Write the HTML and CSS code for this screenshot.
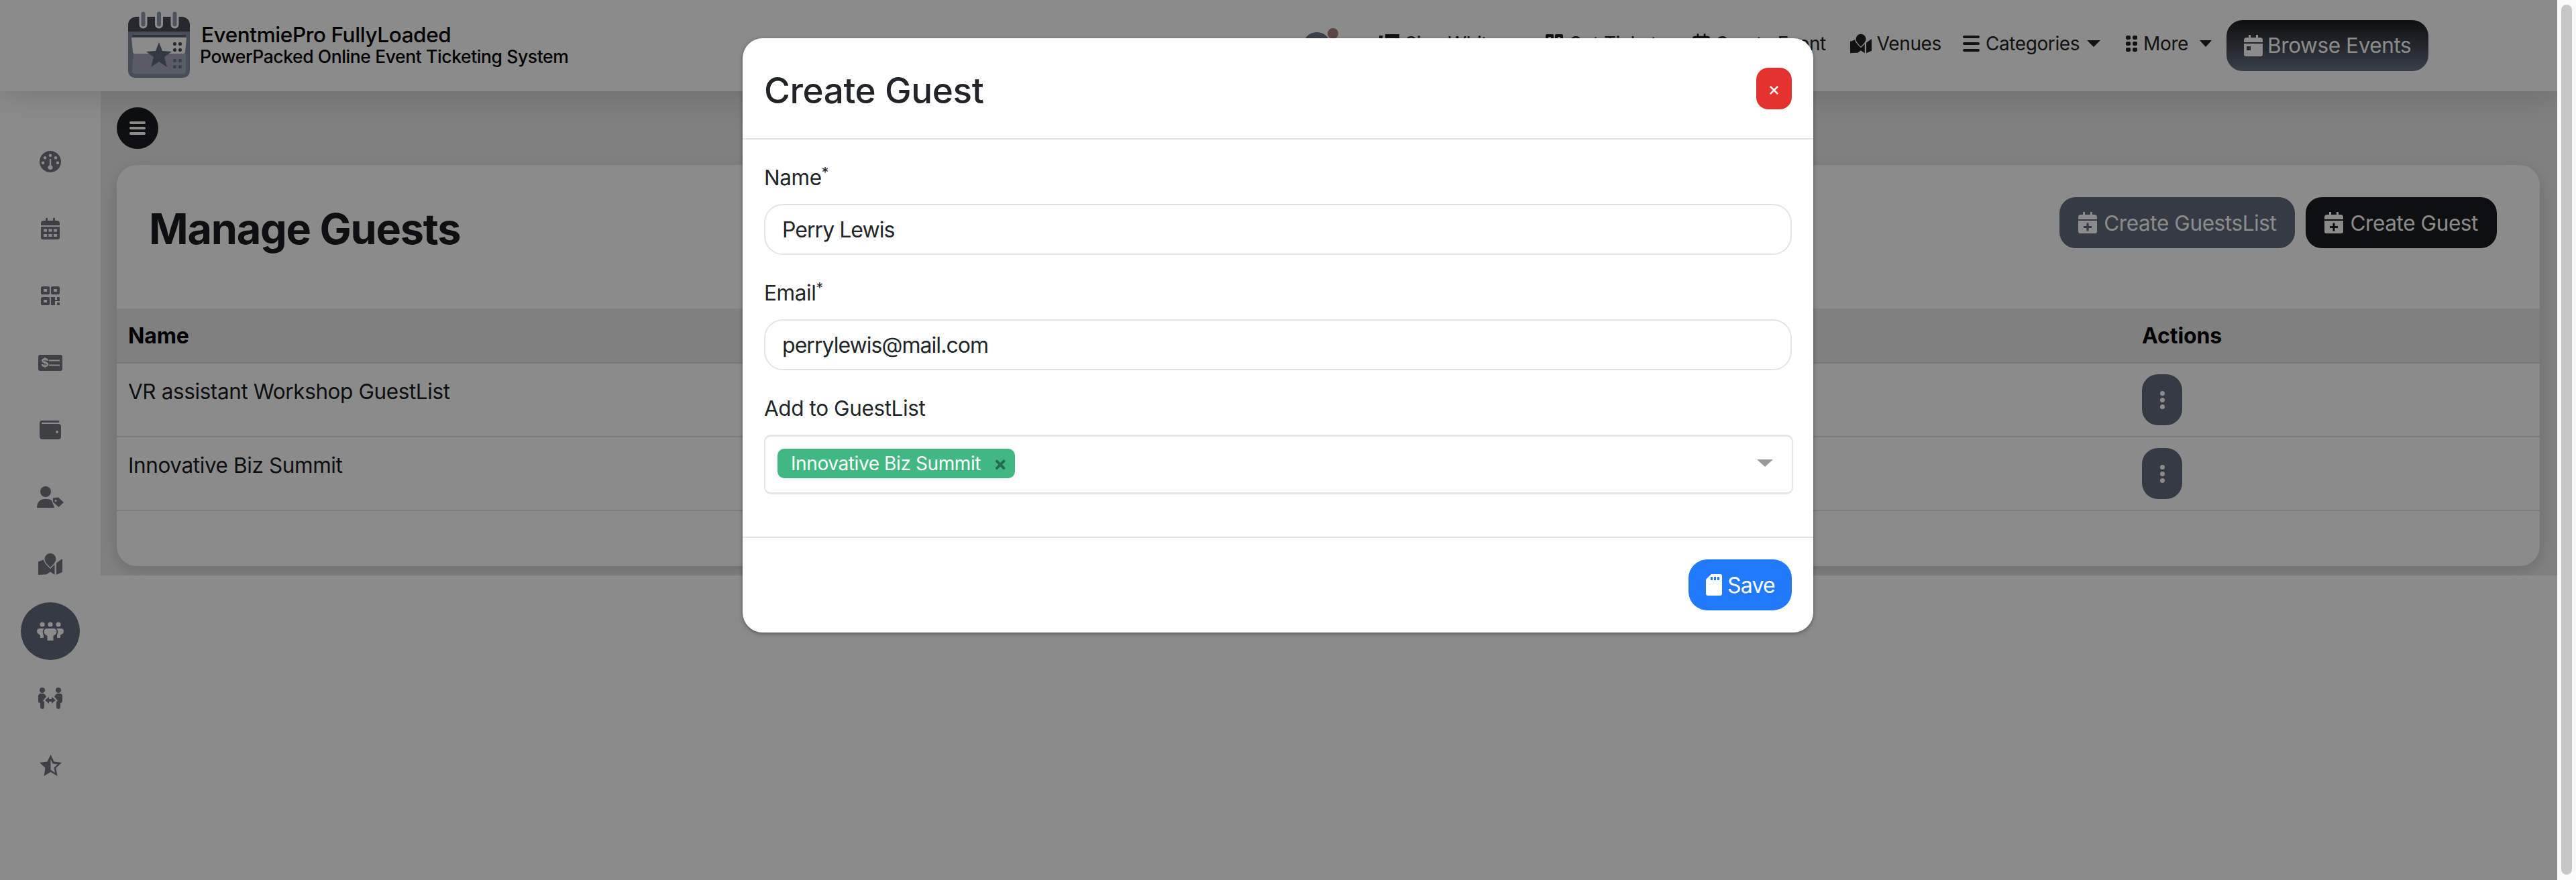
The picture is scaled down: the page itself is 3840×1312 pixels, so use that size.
FILE: index.html
```html
<!DOCTYPE html>
<html lang="en">
<head>
    <meta charset="UTF-8">
    <title>Manage Guests</title>
    <link rel="stylesheet" href="styles.css">
</head>
<body>
    <svg class="sprite" aria-hidden="true">
        <symbol id="cal-plus" viewBox="0 0 28 32">
            <path fill-rule="evenodd" d="M7 0h3v4h8V0h3v4h3a4 4 0 0 1 4 4v3H0V8a4 4 0 0 1 4-4h3zM0 13h28v16a3 3 0 0 1-3 3H3a3 3 0 0 1-3-3zM12.500 16.500h3v4.500H20v3h-4.500v4.500h-3V24H8v-3h4.500z"/>
        </symbol>
        <symbol id="cal-day" viewBox="0 0 28 32">
            <path fill-rule="evenodd" d="M7 0h3v4h8V0h3v4h3a4 4 0 0 1 4 4v3H0V8a4 4 0 0 1 4-4h3zM0 13h28v16a3 3 0 0 1-3 3H3a3 3 0 0 1-3-3zM4 17v6h6v-6z"/>
        </symbol>
        <symbol id="map-pin" viewBox="0 0 36 32">
            <path d="M18 0a8.500 8.500 0 0 1 8.500 8.500c0 4-5 9.500-8.500 12.500-3.500-3-8.500-8.500-8.500-12.500A8.500 8.500 0 0 1 18 0zM0 12.500l8-3c.5 3 3.500 7 6 9.500v11l-3 1.500-11 .5zM36 8v20l-9 4V14.500zM11.500 16.500L18 23l6.500-6.500V32L18 27.500 11.500 32z"/>
        </symbol>
    </svg>

    <div class="page">
        <div class="main">
            <!-- top bar -->
            <header class="topbar">
                <div class="brand">
                    <svg class="logo" viewBox="0 0 92 100">
                        <path fill="#868ea2" d="M0 28h92v62a10 10 0 0 1-10 10H10a10 10 0 0 1-10-10z"/>
                        <path fill="#444a54" d="M12 9h68a12 12 0 0 1 12 12v10H0V21A12 12 0 0 1 12 9z"/>
                        <path fill="#555c6b" d="M6 39h80v-3H6z"/>
                        <path fill="#a3aab9" d="M8 64h78v26a4 4 0 0 1-4 4H10a4 4 0 0 1-4-4z"/>
                        <path fill="#fff" d="M5 40h82l-2 21a3 3 0 0 1-3 3H10a3 3 0 0 1-3-3z"/>
                        <path fill="#5f6778" d="M46 47l5 13 14 1-11 8 4 15-12-8-12 8 4-15-11-8 14-1z"/>
                        <g fill="#8f97a9" stroke="#fff" stroke-width="3">
                            <rect x="18" y="0" width="9" height="25" rx="4.500"/>
                            <rect x="41.500" y="0" width="9" height="25" rx="4.500"/>
                            <rect x="65" y="0" width="9" height="25" rx="4.500"/>
                        </g>
                        <g fill="#444a54">
                            <rect x="67" y="47" width="5" height="5" rx="2"/>
                            <rect x="75" y="47" width="5" height="5" rx="2"/>
                            <rect x="67" y="56" width="5" height="5" rx="2"/>
                            <rect x="75" y="56" width="5" height="5" rx="2"/>
                        </g>
                        <g fill="#6d7486">
                            <rect x="67" y="72" width="5" height="5" rx="2"/>
                            <rect x="75" y="72" width="5" height="5" rx="2"/>
                            <rect x="67" y="81" width="5" height="5" rx="2"/>
                            <rect x="75" y="81" width="5" height="5" rx="2"/>
                        </g>
                    </svg>
                    <div class="brand-text">
                        <div class="brand-name">EventmiePro FullyLoaded</div>
                        <div class="brand-tag">PowerPacked Online Event Ticketing System</div>
                    </div>
                </div>

                <nav class="topnav">
                    <span class="avatar"><i class="avatar-dot"></i></span>
                    <a class="nav-item nav-sign">
                        <svg class="nav-ico" width="30" height="28" viewBox="0 0 30 28"><path d="M0 2h5v5H0zM0 10h5v5H0zM9 0h21v28H9z"/></svg>
                        Sign White
                    </a>
                    <a class="nav-item nav-tickets">
                        <svg class="nav-ico" width="26" height="28" viewBox="0 0 26 28"><path fill-rule="evenodd" d="M2 0h8a2 2 0 0 1 2 2v8a2 2 0 0 1-2 2H2a2 2 0 0 1-2-2V2a2 2 0 0 1 2-2zM16 0h8a2 2 0 0 1 2 2v8a2 2 0 0 1-2 2h-8a2 2 0 0 1-2-2V2a2 2 0 0 1 2-2zM4 4v4h4V4zM18 4v4h4V4z"/></svg>
                        Get Tickets
                    </a>
                    <a class="nav-item nav-create">
                        <svg class="nav-ico" width="26" height="30"><use href="#cal-plus"/></svg>
                        Create Event
                    </a>
                    <a class="nav-item nav-venues">
                        <svg class="nav-ico" width="32" height="30"><use href="#map-pin"/></svg>
                        Venues
                    </a>
                    <a class="nav-item nav-cats">
                        <svg class="nav-ico nav-ico-tight" width="25" height="24" viewBox="0 0 25 24"><path d="M2 0h21a2 2 0 0 1 0 4H2a2 2 0 0 1 0-4zM2 10h21a2 2 0 0 1 0 4H2a2 2 0 0 1 0-4zM2 20h21a2 2 0 0 1 0 4H2a2 2 0 0 1 0-4z"/></svg>
                        Categories<i class="caret"></i>
                    </a>
                    <a class="nav-item">
                        <svg class="nav-ico nav-ico-tight" width="17" height="24" viewBox="0 0 17 24"><g><rect width="7" height="6" rx="2"/><rect x="10" width="7" height="6" rx="2"/><rect y="9" width="7" height="6" rx="2"/><rect x="10" y="9" width="7" height="6" rx="2"/><rect y="18" width="7" height="6" rx="2"/><rect x="10" y="18" width="7" height="6" rx="2"/></g></svg>
                        More<i class="caret caret-more"></i>
                    </a>
                    <a class="browse-btn">
                        <svg width="28" height="32"><use href="#cal-day"/></svg>
                        Browse Events
                    </a>
                </nav>
            </header>

            <div class="app-body">
                <!-- side menu -->
                <aside class="sidebar">
                    <div class="side-item">
                        <svg width="32" height="32" viewBox="0 0 32 32"><path fill-rule="evenodd" d="M16 0a16 16 0 1 1 0 32 16 16 0 0 1 0-32zM16 4.500a2.300 2.300 0 1 0 0 4.600 2.300 2.300 0 0 0 0-4.600zM8 8a2.300 2.300 0 1 0 0 4.600A2.300 2.300 0 0 0 8 8zM24 8a2.300 2.300 0 1 0 0 4.600A2.300 2.300 0 0 0 24 8zM5 15.500a2.300 2.300 0 1 0 0 4.600 2.300 2.300 0 0 0 0-4.600zM27 15.500a2.300 2.300 0 1 0 0 4.600 2.300 2.300 0 0 0 0-4.600zM14.800 12v9.300a3.500 3.500 0 1 0 2.400 0V12z"/></svg>
                    </div>
                    <div class="side-item">
                        <svg width="28" height="32" viewBox="0 0 28 32"><path fill-rule="evenodd" d="M7 0h3v4h8V0h3v4h3a4 4 0 0 1 4 4v3H0V8a4 4 0 0 1 4-4h3zM0 13h28v16a3 3 0 0 1-3 3H3a3 3 0 0 1-3-3zM4 16.500v4h5v-4zM11.500 16.500v4h5v-4zM19 16.500v4h5v-4zM4 24v4h5v-4zM11.500 24v4h5v-4zM19 24v4h5v-4z"/></svg>
                    </div>
                    <div class="side-item">
                        <svg width="28" height="28" viewBox="0 0 28 28"><path fill-rule="evenodd" d="M2 0h9a2 2 0 0 1 2 2v8a2 2 0 0 1-2 2H2a2 2 0 0 1-2-2V2a2 2 0 0 1 2-2zM17 0h9a2 2 0 0 1 2 2v8a2 2 0 0 1-2 2h-9a2 2 0 0 1-2-2V2a2 2 0 0 1 2-2zM2 16h9a2 2 0 0 1 2 2v8a2 2 0 0 1-2 2H2a2 2 0 0 1-2-2v-8a2 2 0 0 1 2-2zM15 16h6v4h3v-4h4v6h-7v6h-6zM24 24h4v4h-4zM4 4v4h5V4zM19 4v4h5V4zM4 20v4h5v-4z"/></svg>
                    </div>
                    <div class="side-item">
                        <svg width="36" height="24" viewBox="0 0 36 24"><path fill-rule="evenodd" d="M3 0h30a3 3 0 0 1 3 3v18a3 3 0 0 1-3 3H3a3 3 0 0 1-3-3V3a3 3 0 0 1 3-3zM16 7.500v2h16v-2zM16 14.500v2h16v-2z"/><text class="dollar" x="4" y="18">$</text></svg>
                    </div>
                    <div class="side-item">
                        <svg width="32" height="28" viewBox="0 0 32 28"><path fill-rule="evenodd" d="M4 0h24a1.500 1.500 0 0 1 0 3H4a1 1 0 0 0 0 2h24a4 4 0 0 1 4 4v15a4 4 0 0 1-4 4H4a4 4 0 0 1-4-4V4a4 4 0 0 1 4-4zM26 15a2 2 0 1 0 0 4 2 2 0 0 0 0-4z"/></svg>
                    </div>
                    <div class="side-item">
                        <svg width="40" height="32" viewBox="0 0 40 32"><path fill-rule="evenodd" d="M13 0a8 8 0 1 1 0 16 8 8 0 0 1 0-16zM0 32c0-8 5-13 11-13h4c3 0 5 .7 7 2l4 10.500c-.3.300-.5.500-1 .5zM24 17.500l8-1 8 7.500-7.500 7-8.500-7.500zM28 20a1.500 1.500 0 1 0 0 3 1.500 1.500 0 0 0 0-3z"/></svg>
                    </div>
                    <div class="side-item">
                        <svg width="36" height="32"><use href="#map-pin"/></svg>
                    </div>
                    <div class="side-item side-active">
                        <span class="side-pill">
                            <svg width="40" height="28" viewBox="0 0 40 28"><circle cx="8" cy="4" r="3.600"/><circle cx="20" cy="4" r="3.600"/><circle cx="32" cy="4" r="3.600"/><path d="M4 10h7c-2.500 2-3 6-1 10v4H5v-4c-3-1.500-5-3-5-6s2-4 4-4zM36 10h-7c2.500 2 3 6 1 10v4h5v-4c3-1.500 5-3 5-6s-2-4-4-4zM15 10h10c3 0 4.500 2 4.500 5s-3 5-5 6v7h-9v-7c-2-1-5-3-5-6s1.500-5 4.500-5z"/></svg>
                        </span>
                    </div>
                    <div class="side-item">
                        <svg width="38" height="32" viewBox="0 0 38 32"><circle cx="7" cy="4" r="4"/><circle cx="31" cy="4" r="4"/><path d="M1 13a4 4 0 0 1 4-4h3a4 4 0 0 1 3 1.500l2 3-5 6.500 2 1V29a3 3 0 0 1-6 0v-6a3 3 0 0 1-3-3zM37 13a4 4 0 0 0-4-4h-3a4 4 0 0 0-3 1.500l-2 3 5 6.500-2 1V29a3 3 0 0 0 6 0v-6a3 3 0 0 0 3-3zM11 19l6-5v3h4v-3l6 5-6 5v-3h-4v3z"/></svg>
                    </div>
                    <div class="side-item">
                        <svg width="33" height="32" viewBox="0 0 33 32"><path fill-rule="evenodd" d="M16.500 0l5 10.500L33 12l-8.500 8 2 12-10-6-10 6 2-12L0 12l11.500-1.500zM16.500 7v16l6.500 4-1.500-7.500 5.500-5-7.500-1z"/></svg>
                    </div>
                </aside>

                <!-- content -->
                <main class="content">
                    <button class="menu-toggle">
                        <svg width="24" height="24" viewBox="0 0 24 24"><path d="M2 2h20a2 2 0 0 1 0 4H2a2 2 0 0 1 0-4zM2 10h20a2 2 0 0 1 0 4H2a2 2 0 0 1 0-4zM2 18h20a2 2 0 0 1 0 4H2a2 2 0 0 1 0-4z"/></svg>
                    </button>

                    <section class="card">
                        <div class="card-head">
                            <h1 class="page-title">Manage Guests</h1>
                            <div class="card-actions">
                                <a class="btn btn-slate"><svg width="28" height="32"><use href="#cal-plus"/></svg>Create GuestsList</a>
                                <a class="btn btn-dark"><svg width="28" height="32"><use href="#cal-plus"/></svg>Create Guest</a>
                            </div>
                        </div>

                        <table class="guest-table">
                            <thead>
                                <tr><th>Name</th><th class="col-actions">Actions</th></tr>
                            </thead>
                            <tbody>
                                <tr>
                                    <td>VR assistant Workshop GuestList</td>
                                    <td class="col-actions"><button class="kebab"><i></i><i></i><i></i></button></td>
                                </tr>
                                <tr>
                                    <td>Innovative Biz Summit</td>
                                    <td class="col-actions"><button class="kebab"><i></i><i></i><i></i></button></td>
                                </tr>
                            </tbody>
                        </table>
                        <div class="card-tail"></div>
                    </section>
                </main>
            </div>

            <div class="backdrop"></div>

            <!-- create guest dialog -->
            <div class="modal-wrap">
                <div class="modal">
                    <div class="modal-header">
                        <h5 class="modal-title">Create Guest</h5>
                        <button class="modal-close">×</button>
                    </div>
                    <div class="modal-body">
                        <div class="form-group">
                            <label class="form-label">Name<sup>*</sup></label>
                            <input class="form-control" type="text" value="Perry Lewis">
                        </div>
                        <div class="form-group">
                            <label class="form-label">Email<sup>*</sup></label>
                            <input class="form-control" type="text" value="perrylewis@mail.com">
                        </div>
                        <div class="form-group form-group-last">
                            <label class="form-label">Add to GuestList</label>
                            <div class="multiselect">
                                <span class="ms-tag">Innovative Biz Summit<b class="ms-remove">×</b></span>
                                <i class="ms-arrow"></i>
                            </div>
                        </div>
                    </div>
                    <div class="modal-footer">
                        <button class="btn-save">
                            <svg width="24" height="32" viewBox="0 0 24 32"><path fill-rule="evenodd" d="M8 0h13a3 3 0 0 1 3 3v26a3 3 0 0 1-3 3H3a3 3 0 0 1-3-3V8zM7 4v5h3V4zM12 4v5h3V4zM17 4v5h3V4z"/></svg>
                            Save
                        </button>
                    </div>
                </div>
            </div>
        </div>

        <div class="scrollbar"><div class="scroll-thumb"></div></div>
    </div>
</body>
</html>
```

FILE: styles.css
```css
* {
    box-sizing: border-box;
}

body {
    margin: 0;
    background: #fff;
    font-family: Inter, "Liberation Sans", sans-serif;
    letter-spacing: -0.025em;
    color: #000;
    overflow: hidden;
}

svg {
    fill: currentColor;
    flex: none;
}

.sprite {
    display: none;
}

.page {
    display: flex;
    width: 3840px;
    height: 1312px;
}

.main {
    position: relative;
    width: 3812px;
    display: flex;
    flex-direction: column;
    overflow: hidden;
}

.scrollbar {
    flex: 1;
    background: #fafafa;
    padding: 7px 6px 8px 6px;
}

.scroll-thumb {
    height: 100%;
    background: #c6c6c6;
    border-radius: 8px;
}

/* top bar */
.topbar {
    position: relative;
    z-index: 2;
    height: 136px;
    flex: none;
    display: flex;
    justify-content: space-between;
    padding: 16px 192px 0 191px;
    background: #fff;
    box-shadow: 0 6px 50px rgba(0,0,0,0.16);
}

.brand {
    display: flex;
    align-items: flex-start;
}

.logo {
    width: 92px;
    height: 100px;
}

.brand-text {
    margin: 19px 0 0 15px;
}

.brand-name {
    font-size: 31.5px;
    line-height: 34px;
    font-weight: 500;
    margin-left: 2px;
}

.brand-tag {
    font-size: 26.5px;
    line-height: 30px;
    font-weight: 500;
}

.topnav {
    display: flex;
    align-items: flex-start;
    font-size: 28px;
    line-height: 34px;
    color: #222;
}

.avatar {
    position: relative;
    width: 42px;
    height: 42px;
    margin: 32px 72px 0 0;
    border-radius: 50%;
    background: #6b7686;
}

.avatar-dot {
    position: absolute;
    top: -6px;
    right: -11px;
    width: 16px;
    height: 16px;
    border-radius: 50%;
    background: #a87f7f;
}

.nav-item {
    display: flex;
    align-items: center;
    height: 34px;
    margin-top: 32px;
    margin-right: 34px;
    white-space: nowrap;
}

.nav-sign {
    width: 212px;
    margin-right: 36px;
}

.nav-tickets {
    margin-right: 39px;
}

.nav-create {
    margin-right: 36px;
}

.nav-venues {
    margin-right: 32px;
}

.nav-cats {
    margin-right: 38px;
}

.nav-ico {
    margin-right: 8px;
}

.nav-ico-tight {
    margin-right: 9px;
}

.caret {
    width: 0;
    height: 0;
    margin-left: 11px;
    border-left: 10px solid transparent;
    border-right: 10px solid transparent;
    border-top: 10px solid #222;
}

.caret-more {
    margin-left: 17px;
    border-left-width: 9px;
    border-right-width: 9px;
}

.browse-btn {
    display: flex;
    align-items: center;
    gap: 7px;
    width: 301px;
    height: 76px;
    margin-top: 14px;
    margin-left: -12px;
    padding-left: 26px;
    border-radius: 24px;
    background: linear-gradient(#1a1c1e, #6a7386);
    color: #fff;
    font-size: 31.5px;
    white-space: nowrap;
}

/* body */
.app-body {
    flex: 1;
    display: flex;
    align-items: flex-start;
}

.sidebar {
    width: 150px;
    flex: none;
    padding-top: 55px;
    color: #73767d;
}

.side-item {
    height: 100px;
    display: flex;
    align-items: center;
    justify-content: center;
}

.dollar {
    font-size: 18px;
    font-weight: 700;
    fill: #fff;
}

.side-pill {
    width: 88px;
    height: 86px;
    display: flex;
    align-items: center;
    justify-content: center;
    border-radius: 50%;
    background: #626b7e;
    color: #fff;
}

.content {
    flex: 1;
    height: 722px;
    padding: 24px 26px 0 24px;
    background: #ebebec;
    overflow: hidden;
}

.menu-toggle {
    display: flex;
    align-items: center;
    justify-content: center;
    width: 62px;
    height: 62px;
    margin-bottom: 24px;
    padding: 0;
    border: none;
    border-radius: 50%;
    background: #1a1c1e;
    color: #fff;
}

.card {
    background: #fff;
    border-radius: 30px;
    box-shadow: 0 6px 22px rgba(0,0,0,0.14);
}

.card-head {
    height: 214px;
    display: flex;
    justify-content: space-between;
    align-items: flex-start;
    padding: 48px 64px 0 48px;
}

.page-title {
    margin: 9px 0 0;
    font-size: 63px;
    line-height: 76px;
    font-weight: 700;
    letter-spacing: -0.02em;
    color: #1a1c1e;
}

.card-actions {
    display: flex;
    gap: 16px;
}

.btn {
    display: flex;
    align-items: center;
    gap: 10px;
    height: 76px;
    padding: 0 28px;
    border-radius: 24px;
    color: #fff;
    font-size: 31.5px;
    white-space: nowrap;
}

.btn-slate {
    background: #626b7e;
}

.btn-dark {
    background: #1a1c1e;
}

.guest-table {
    width: 100%;
    border-collapse: collapse;
    table-layout: fixed;
    font-size: 31.5px;
}

.guest-table th {
    height: 81px;
    padding: 0 17px;
    text-align: left;
    font-size: 32px;
    font-weight: 700;
    letter-spacing: -0.1px;
    background: #ebebeb;
    border-bottom: 2px solid #dcdcdc;
}

.guest-table td {
    height: 110px;
    padding: 24px 17px 0;
    vertical-align: top;
    line-height: 36px;
    color: #1a1c1e;
    border-bottom: 2px solid #e0e0e0;
}

.guest-table .col-actions {
    width: 610px;
}

.guest-table td.col-actions {
    padding-top: 16px;
}

.kebab {
    width: 60px;
    height: 76px;
    display: flex;
    flex-direction: column;
    align-items: center;
    justify-content: center;
    gap: 3px;
    padding: 0;
    border: none;
    border-radius: 24px;
    background: #626b7e;
}

.kebab i {
    width: 7px;
    height: 7px;
    border-radius: 50%;
    background: #fff;
}

.card-tail {
    height: 82px;
}

/* dialog */
.backdrop {
    position: absolute;
    inset: 0;
    z-index: 3;
    background: rgba(0,0,0,0.455);
}

.modal-wrap {
    position: absolute;
    inset: 0;
    z-index: 4;
    display: flex;
    justify-content: center;
    align-items: flex-start;
    padding: 57px 2px 0 0;
}

.modal {
    width: 1596px;
    height: 886px;
    background: #fff;
    border-radius: 30px;
    box-shadow: 0 2px 6px rgba(0,0,0,0.35);
    color: #212529;
}

.modal-header {
    height: 151px;
    display: flex;
    justify-content: space-between;
    padding: 44px 32px 0 32px;
    border-bottom: 2px solid #e2e4e7;
}

.modal-title {
    margin: 2px 0 0;
    font-size: 53px;
    line-height: 64px;
    font-weight: 500;
}

.modal-close {
    width: 53px;
    height: 62px;
    padding: 0;
    border: none;
    border-radius: 18px;
    background: #e4322e;
    color: #fff;
    font: 400 28px Inter, sans-serif;
}

.modal-body {
    height: 594px;
    padding: 35px 32px 0 32px;
    border-bottom: 2px solid #e2e4e7;
}

.form-group {
    margin-bottom: 35px;
}

.form-label {
    display: block;
    margin-bottom: 17px;
    font-size: 31.5px;
    line-height: 44px;
}

.form-label sup {
    font-size: 21px;
    line-height: 0;
}

.form-control {
    display: block;
    width: 100%;
    height: 76px;
    padding: 0 25px;
    border: 2px solid #e2e4e7;
    border-radius: 28px;
    font: 400 32px Inter, sans-serif;
    letter-spacing: -0.03em;
    color: #212529;
    outline: none;
}

.multiselect {
    display: flex;
    align-items: center;
    justify-content: space-between;
    width: calc(100% + 2px);
    height: 89px;
    padding: 0 28px 4px 18px;
    border: solid #e6e6e6;
    border-width: 3px 2px;
    border-radius: 10px;
}

.ms-tag {
    display: flex;
    align-items: center;
    height: 44px;
    padding: 0 12px 0 20px;
    border-radius: 10px;
    background: #41b883;
    color: #fff;
    font-size: 28px;
}

.ms-remove {
    margin-left: 19px;
    color: #266d4d;
    font-size: 30px;
    font-weight: 700;
}

.ms-arrow {
    width: 0;
    height: 0;
    border-left: 12px solid transparent;
    border-right: 12px solid transparent;
    border-top: 11px solid #999;
}

.modal-footer {
    display: flex;
    justify-content: flex-end;
    padding: 32px 32px 0;
}

.btn-save {
    display: flex;
    align-items: center;
    gap: 8px;
    width: 154px;
    height: 76px;
    padding: 0 0 0 26px;
    border: none;
    border-radius: 28px;
    background: #2179fb;
    color: #fff;
    font: 400 32px Inter, sans-serif;
    letter-spacing: -0.025em;
}
```
